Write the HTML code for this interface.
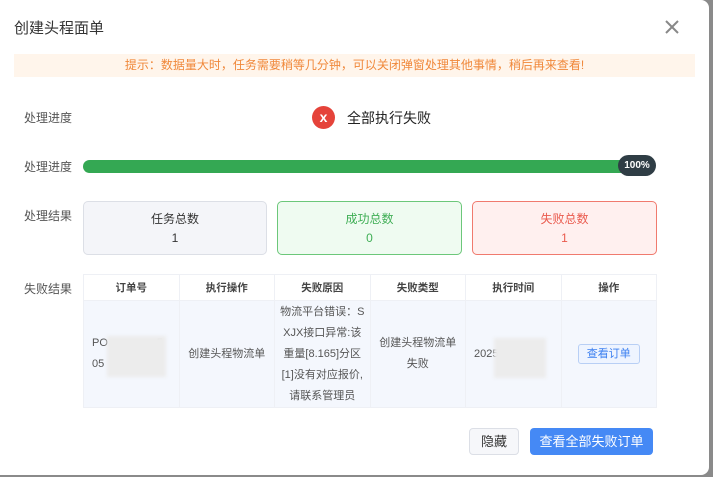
<!DOCTYPE html>
<html><head><meta charset="utf-8"><style>
*{margin:0;padding:0;box-sizing:border-box}
body{width:713px;height:477px;background:#8a8a8a;font-family:"Liberation Sans","Noto Sans CJK SC",sans-serif;position:relative;overflow:hidden}
.m{position:absolute;left:0;top:0;width:709px;height:475px;background:#fff;border-radius:0 8px 8px 0}
.a{position:absolute}
.lbl{position:absolute;left:24px;font-size:12px;color:#555}
.card{position:absolute;top:201px;height:54px;border:1px solid;border-radius:5px;text-align:center;font-size:12px;padding-top:8px;line-height:19px}
table{position:absolute;left:83px;top:274px;width:574px;border-collapse:collapse;font-size:11px;color:#555;table-layout:fixed}
td,th{border:1px solid #eef0f5;text-align:center;font-weight:normal}
th{height:26px;color:#444;background:#fff;font-weight:bold;font-size:10.5px}
td{height:107px;background:#f4f7fd;line-height:21px;padding:0 4px;white-space:nowrap}
.blur{position:absolute;background:#ececec;filter:blur(1.5px)}
</style></head><body><div class="m">
<div class="a" style="left:14px;top:17px;font-size:15px;color:#333">创建头程面单</div>
<svg class="a" style="left:664px;top:19px" width="16" height="16"><path d="M2 2L14 14M14 2L2 14" stroke="#888" stroke-width="2"/></svg>
<div class="a" style="left:14px;top:54px;width:681px;height:23px;background:#fff5eb;color:#f0883a;font-size:12px;text-align:center;line-height:23px">提示：数据量大时，任务需要稍等几分钟，可以关闭弹窗处理其他事情，稍后再来查看!</div>
<div class="lbl" style="top:109px">处理进度</div>
<div class="a" style="left:312px;top:106px;width:23px;height:23px;border-radius:50%;background:#e5433a;color:#fff;font-size:14px;font-weight:bold;text-align:center;line-height:22px">x</div>
<div class="a" style="left:347px;top:108px;font-size:14px;color:#222">全部执行失败</div>
<div class="lbl" style="top:158px">处理进度</div>
<div class="a" style="left:83px;top:160px;width:562px;height:13px;border-radius:7px;background:#34a853"></div>
<div class="a" style="left:618px;top:155px;width:38px;height:21px;border-radius:11px;background:#2f3d45;color:#fff;font-size:10px;font-weight:bold;text-align:center;line-height:21px">100%</div>
<div class="lbl" style="top:207px">处理结果</div>
<div class="card" style="left:83px;width:184px;border-color:#dcdfe6;background:#f4f5f9;color:#333">任务总数<br>1</div>
<div class="card" style="left:277px;width:185px;border-color:#6cc77a;background:#effbf1;color:#3fae55">成功总数<br>0</div>
<div class="card" style="left:472px;width:185px;border-color:#f07a6e;background:#fff0ef;color:#ea5a4d">失败总数<br>1</div>
<div class="lbl" style="top:280px">失败结果</div>
<table><tr><th>订单号</th><th>执行操作</th><th>失败原因</th><th>失败类型</th><th>执行时间</th><th>操作</th></tr>
<tr><td style="text-align:left;padding-left:8px">PO&nbsp;&nbsp;&nbsp;&nbsp;&nbsp;&nbsp;&nbsp;&nbsp;&nbsp;&nbsp;&nbsp;&nbsp;&nbsp;&nbsp;&nbsp;&nbsp;5<br>05</td><td>创建头程物流单</td><td>物流平台错误：S<br>XJX接口异常:该<br>重量[8.165]分区<br>[1]没有对应报价,<br>请联系管理员</td><td>创建头程物流单<br>失败</td><td style="text-align:left;padding-left:8px">2025</td><td><span style="display:inline-block;border:1px solid #b8cff5;background:#eef4ff;color:#3b7ff0;border-radius:3px;padding:0 8px;line-height:18px">查看订单</span></td></tr></table>
<div class="blur" style="left:107px;top:336px;width:59px;height:41px"></div>
<div class="blur" style="left:494px;top:338px;width:52px;height:40px"></div>
<div class="a" style="left:469px;top:428px;width:50px;height:27px;border:1px solid #dcdfe6;border-radius:4px;background:#f6f7fa;font-size:13px;color:#333;text-align:center;line-height:25px">隐藏</div>
<div class="a" style="left:530px;top:428px;width:123px;height:27px;border-radius:4px;background:#4589f5;font-size:13px;color:#fff;text-align:center;line-height:27px">查看全部失败订单</div>
</div></body></html>
